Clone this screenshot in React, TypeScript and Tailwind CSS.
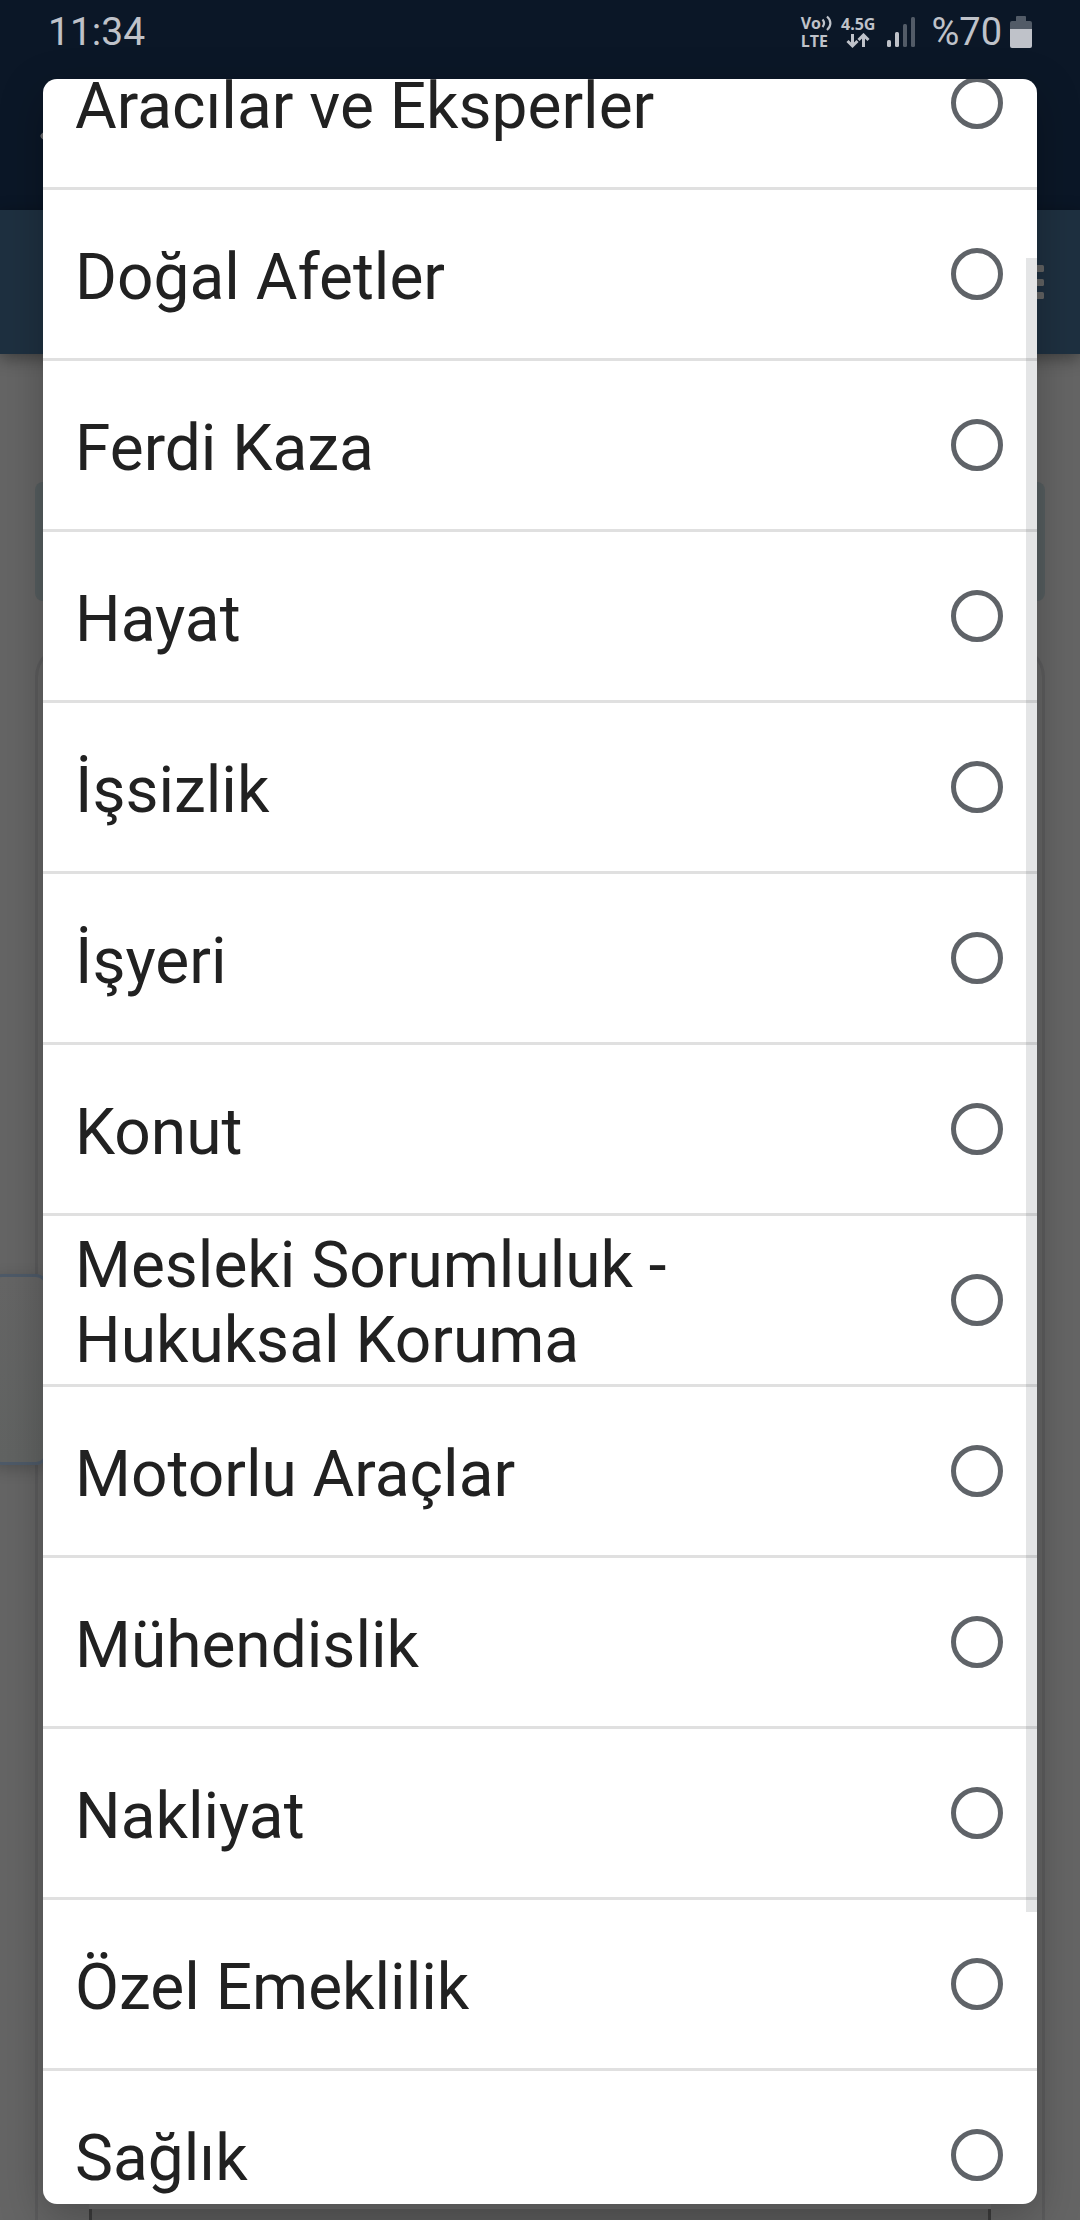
import { useState } from "react";
import { ArrowLeft } from "lucide-react";

const branches = [
  "Aracılar ve Eksperler",
  "Doğal Afetler",
  "Ferdi Kaza",
  "Hayat",
  "İşsizlik",
  "İşyeri",
  "Konut",
  "Mesleki Sorumluluk - Hukuksal Koruma",
  "Motorlu Araçlar",
  "Mühendislik",
  "Nakliyat",
  "Özel Emeklilik",
  "Sağlık",
];

function VolteIcon() {
  return (
    <div className="flex flex-col font-['Open_Sans',sans-serif] text-[16px] leading-[18px] font-bold">
      <div className="flex items-center">
        <span>Vo</span>
        <svg width="12" height="18" viewBox="0 0 12 18" fill="none" stroke="currentColor" strokeWidth="2.2">
          <path d="M1.500 5.500c2 2.200 2 5 0 7.500" />
          <path d="M6 2.500c4.500 4 4.500 9.500 0 13.500" />
        </svg>
      </div>
      <span>LTE</span>
    </div>
  );
}

function NetworkIcon() {
  return (
    <div className="flex flex-col items-center font-['Open_Sans',sans-serif] text-[16px] leading-[18px] font-bold">
      <span>4.5G</span>
      <svg width="24" height="16" viewBox="0 0 24 16" fill="none" stroke="currentColor" strokeWidth="3">
        <path d="M6.5 1v12M1.5 8l5 5 5-5" />
        <path d="M17.500 14V2M12.500 7l5-5 5 5" />
      </svg>
    </div>
  );
}

function SignalIcon() {
  return (
    <svg width="28" height="32" viewBox="0 0 28 32" fill="currentColor">
      <rect x="0" y="24" width="4" height="7" rx="1.500" />
      <rect x="8" y="16" width="4" height="15" rx="1.500" />
      <rect x="16" y="8" width="4" height="23" rx="1.500" opacity="0.4" />
      <rect x="24" y="1" width="4" height="30" rx="1.500" opacity="0.4" />
    </svg>
  );
}

function BatteryIcon() {
  return (
    <svg width="22" height="34" viewBox="0 0 22 34" fill="currentColor">
      <path d="M6 2a1 1 0 0 1 1-1h8a1 1 0 0 1 1 1v4h4a2 2 0 0 1 2 2v6H0V8a2 2 0 0 1 2-2h4z" opacity="0.4" />
      <path d="M0 14h22v17a2 2 0 0 1-2 2H2a2 2 0 0 1-2-2z" />
    </svg>
  );
}

function StatusBar() {
  return (
    <div className="flex h-16 items-center justify-between pr-12 pl-12 text-[#bfc2c9]">
      <span className="text-[39px] leading-none">11:34</span>
      <div className="flex items-center">
        <VolteIcon />
        <div className="w-2" />
        <NetworkIcon />
        <div className="w-3" />
        <SignalIcon />
        <span className="ml-4 text-[38px] leading-none">%70</span>
        <div className="w-2" />
        <BatteryIcon />
      </div>
    </div>
  );
}

/* Dimmed page behind the dialog */
function Page() {
  return (
    <div className="flex h-full flex-col bg-[#656565]">
      <header className="flex h-[210px] flex-col bg-[#0b1727]">
        <StatusBar />
        <button type="button" aria-label="Geri" className="mt-10 ml-[30px] w-16 text-[#6d6d70]">
          <ArrowLeft size={64} strokeWidth={2} />
        </button>
      </header>
      <nav className="flex h-36 items-center justify-end bg-[#1e3040] pr-9 shadow-[0_4px_16px_rgba(0,0,0,0.4)]">
        <button type="button" aria-label="Menü" className="text-[#626363]">
          <svg width="48" height="34" viewBox="0 0 48 34" fill="currentColor">
            <rect width="48" height="7" rx="1.500" />
            <rect y="14" width="48" height="7" rx="1.500" />
            <rect y="27" width="48" height="7" rx="1.500" />
          </svg>
        </button>
      </nav>
      <main className="flex grow flex-col px-[35px] pt-32">
        <div className="h-[119px] shrink-0 rounded-lg bg-[#555d5f]" />
        <div className="mt-11 flex grow flex-col rounded-t-[32px] border-x-[3px] border-t-[3px] border-[#5c5c5d]">
          <div className="mt-[626px] -ml-[48px] h-[191px] w-[58px] shrink-0 rounded-xl border-[3px] border-[#4e5a68] bg-linear-to-b from-[#656565] to-[#616362] shadow-[0_4px_16px_rgba(0,0,0,0.2)]" />
          <div className="mx-[51px] mt-auto border-t-[6px] border-[#6b6b6b]">
            <div className="h-[11px] border-x-[3px] border-[#3c3c3c] bg-[#5c5c5c]" />
          </div>
        </div>
      </main>
    </div>
  );
}

interface OptionRowProps {
  label: string;
  checked: boolean;
  onSelect: () => void;
}

function OptionRow({ label, checked, onSelect }: OptionRowProps) {
  return (
    <li className="border-b-[3px] border-[#e0e0e0]">
      <label className="flex min-h-[168px] items-center justify-between gap-12 pr-[34px] pl-8">
        <span className="pt-[6px] text-[64px] leading-[75px]">{label}</span>
        <input
          type="radio"
          name="branch"
          checked={checked}
          onChange={onSelect}
          className="size-[52px] shrink-0 appearance-none rounded-full border-[5px] border-[#5f6368] checked:bg-[#5f6368]"
        />
      </label>
    </li>
  );
}

function App() {
  const [selected, setSelected] = useState("");

  return (
    <div className="relative h-screen overflow-hidden font-[Roboto,sans-serif]">
      <Page />

      {/* Select dialog */}
      <div
        role="dialog"
        aria-label="Branş"
        className="absolute inset-x-[43px] top-[79px] bottom-4 overflow-hidden rounded-[14px] bg-white text-[#212121] shadow-[0_14px_44px_rgba(0,0,0,0.25)]"
      >
        <ul className="-mt-15">
          {branches.map((branch) => (
            <OptionRow
              key={branch}
              label={branch}
              checked={selected === branch}
              onSelect={() => setSelected(branch)}
            />
          ))}
        </ul>
        {/* Scroll thumb */}
        <div className="absolute top-[179px] right-0 h-[1654px] w-[11px] bg-[#5f6368]/17" />
      </div>
    </div>
  );
}

export default App;
